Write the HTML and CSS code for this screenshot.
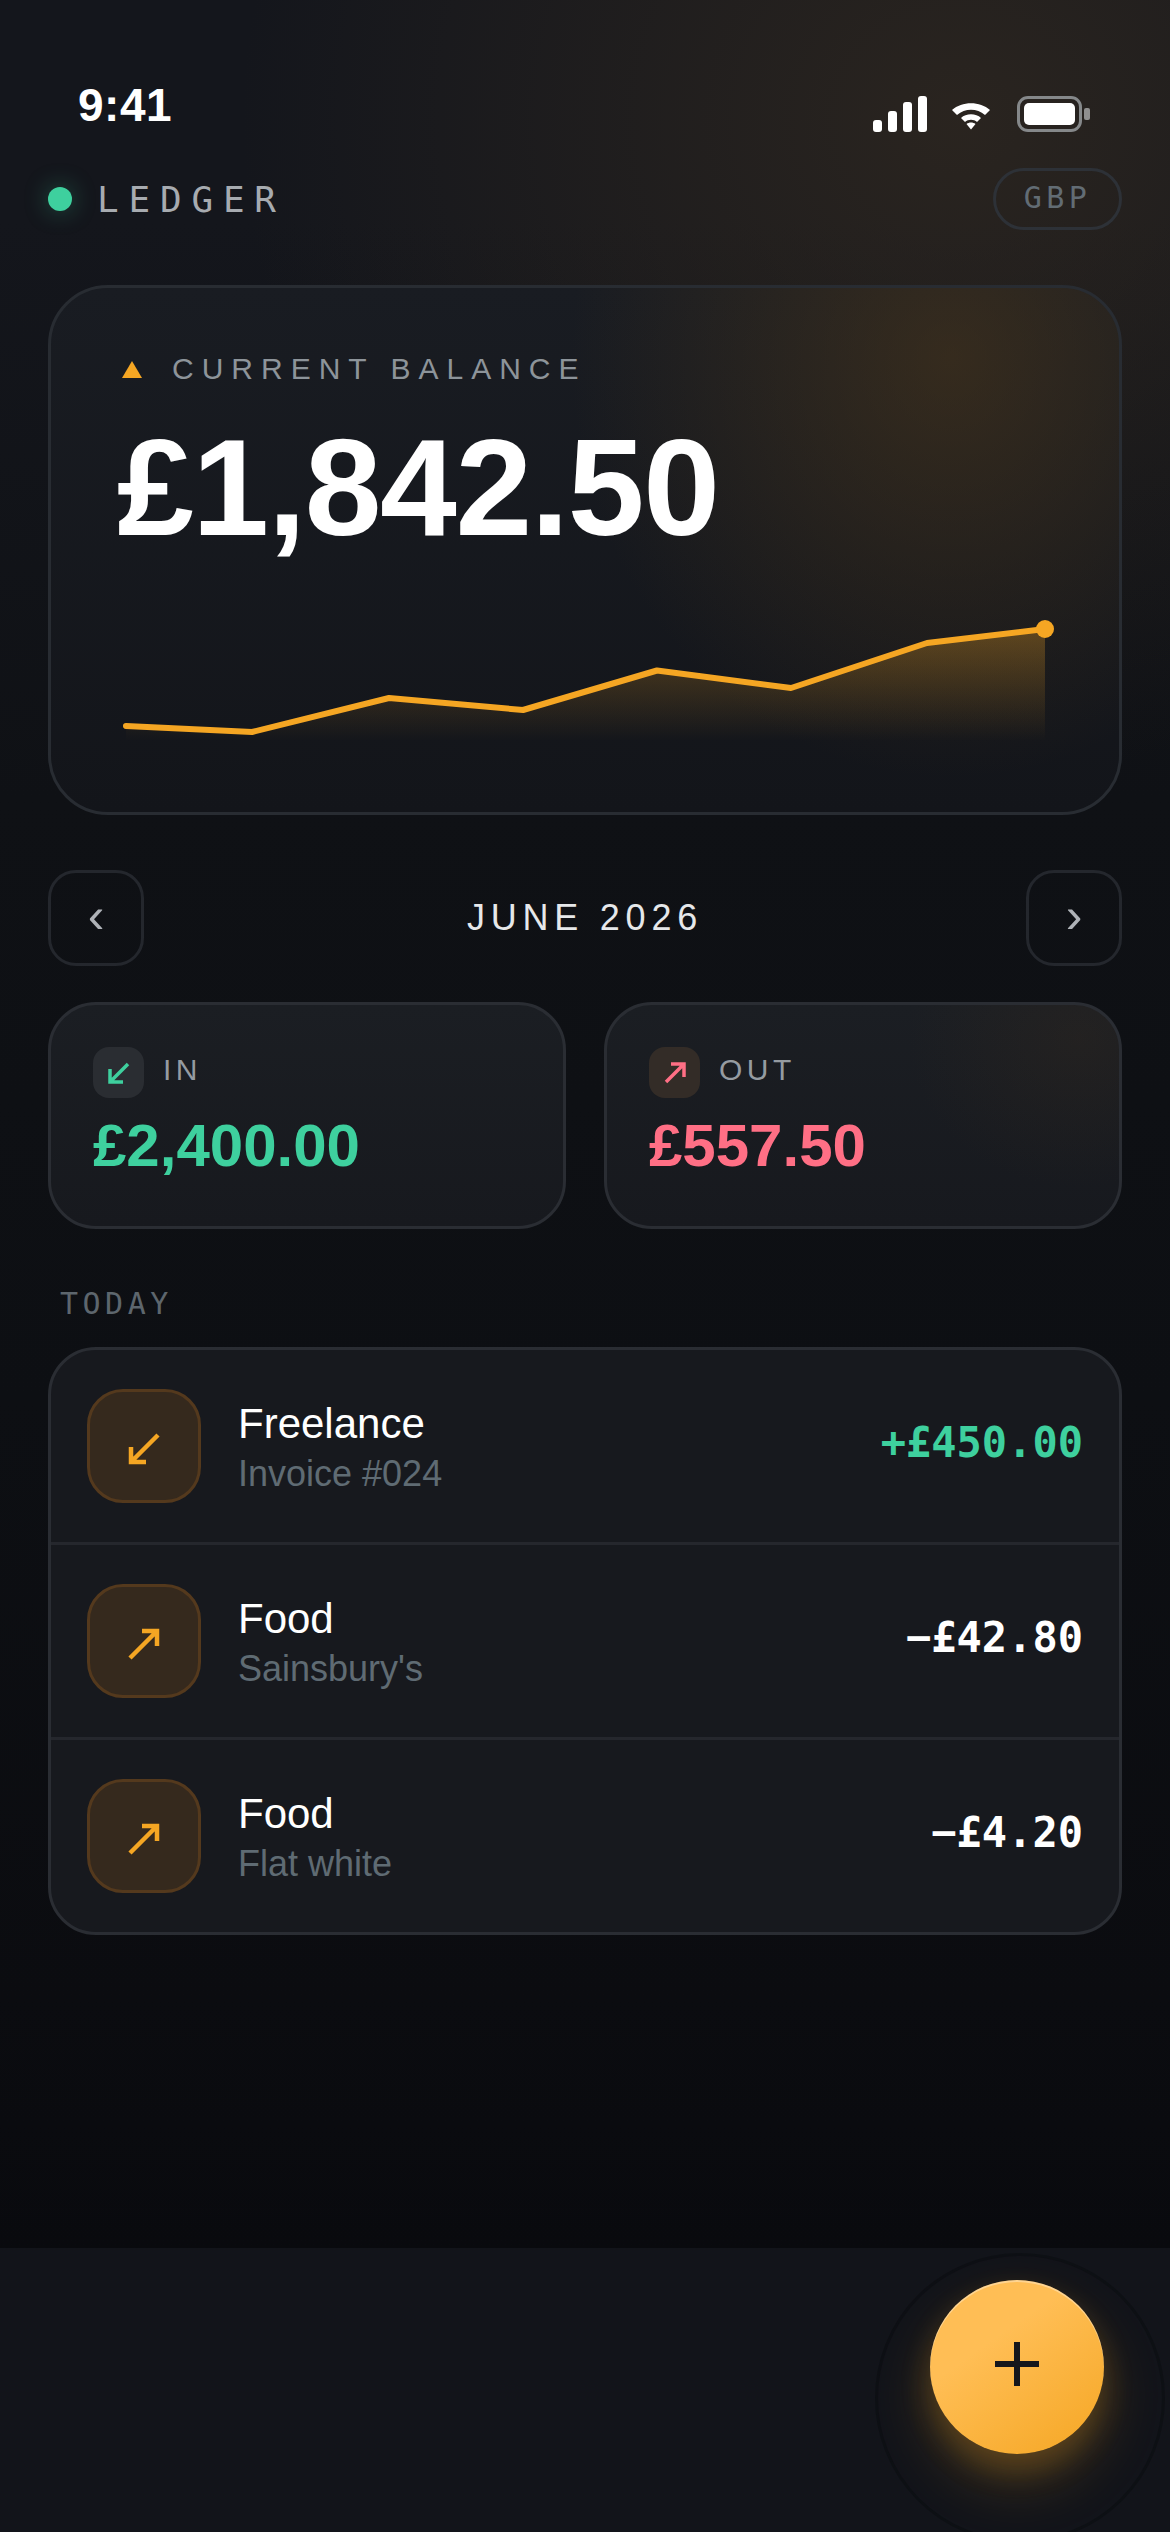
FILE: index.html
```html
<!DOCTYPE html>
<html lang="en">
<head>
<meta charset="utf-8">
<title>Ledger</title>
<link rel="stylesheet" href="styles.css">
</head>
<body>
<div class="phone">
  <main class="main">
    <div class="status">
      <span class="time">9:41</span>
      <div class="status-icons">
        <svg class="signal" width="54" height="36" viewBox="0 0 54 36"><rect x="0" y="24" width="9" height="12" rx="3"/><rect x="15" y="15" width="9" height="21" rx="3"/><rect x="30" y="6" width="9" height="30" rx="3"/><rect x="45" y="0" width="9" height="36" rx="3"/></svg>
        <svg class="wifi" width="40" height="28" viewBox="0 0 40 28"><path d="M1 8 C11 -1 29 -1 39 8 L34 13 C26 6 14 6 6 13 Z"/><path d="M10 16 C15 11 25 11 30 16 L26 20 C23 17 17 17 14 20 Z"/><path d="M15.5 22 C18 20 22 20 24.5 22 L20 27.5 Z"/></svg>
        <div class="battery"><div class="battery-body"><div class="battery-fill"></div></div><div class="battery-nub"></div></div>
      </div>
    </div>

    <header class="header">
      <div class="brand"><span class="dot"></span><span class="brand-name">LEDGER</span></div>
      <div class="pill">GBP</div>
    </header>

    <section class="balance-card">
      <div class="balance-label"><svg class="tri" width="20" height="17" viewBox="0 0 20 17"><path d="M10 0 L20 17 L0 17 Z"/></svg><span>CURRENT BALANCE</span></div>
      <div class="balance">£1,842.50</div>
      <svg class="chart" width="960" height="130" viewBox="0 0 960 130">
        <defs>
          <linearGradient id="area" x1="0" y1="0" x2="0" y2="1">
            <stop offset="0" stop-color="#f5a623" stop-opacity=".3"/>
            <stop offset="1" stop-color="#f5a623" stop-opacity="0"/>
          </linearGradient>
        </defs>
        <path d="M5 107 L131 113 L268 79 L402 91 L536 51.500 L670 69 L806 24 L924 10 L924 122 L5 122 Z" fill="url(#area)"/>
        <path d="M5 107 L131 113 L268 79 L402 91 L536 51.500 L670 69 L806 24 L924 10" fill="none" stroke="#f5a623" stroke-width="6" stroke-linecap="round" stroke-linejoin="round"/>
        <circle cx="924" cy="10" r="9" fill="#f5a623"/>
      </svg>
    </section>

    <nav class="month-nav">
      <button class="nav-btn" type="button">‹</button>
      <span class="month">JUNE 2026</span>
      <button class="nav-btn" type="button">›</button>
    </nav>

    <section class="stats">
      <div class="stat">
        <div class="stat-head">
          <span class="stat-icon stat-icon-in"><svg width="24" height="24" viewBox="0 0 24 24"><path d="M21 3 L3 21 M3 8 L3 21 L16 21" fill="none" stroke="#3ed09e" stroke-width="3.500"/></svg></span>
          <span class="stat-label">IN</span>
        </div>
        <div class="stat-amount green">£2,400.00</div>
      </div>
      <div class="stat stat-out">
        <div class="stat-head">
          <span class="stat-icon stat-icon-out"><svg width="24" height="24" viewBox="0 0 24 24"><path d="M3 21 L21 3 M8 3 L21 3 L21 16" fill="none" stroke="#ff6f85" stroke-width="3.500"/></svg></span>
          <span class="stat-label">OUT</span>
        </div>
        <div class="stat-amount red">£557.50</div>
      </div>
    </section>

    <h2 class="section-title">TODAY</h2>

    <section class="list">
      <div class="row">
        <span class="tile"><svg class="tile-arrow" width="32" height="32" viewBox="0 0 32 32"><path d="M30 2 L3 29 M3 14 L3 29 L18 29" fill="none" stroke="#f5a623" stroke-width="4.500"/></svg></span>
        <div class="row-text"><div class="row-title">Freelance</div><div class="row-sub">Invoice #024</div></div>
        <div class="row-amount green">+£450.00</div>
      </div>
      <div class="row">
        <span class="tile"><svg class="tile-arrow" width="32" height="32" viewBox="0 0 32 32"><path d="M2 30 L29 3 M14 3 L29 3 L29 18" fill="none" stroke="#f5a623" stroke-width="4.500"/></svg></span>
        <div class="row-text"><div class="row-title">Food</div><div class="row-sub">Sainsbury's</div></div>
        <div class="row-amount">−£42.80</div>
      </div>
      <div class="row">
        <span class="tile"><svg class="tile-arrow" width="32" height="32" viewBox="0 0 32 32"><path d="M2 30 L29 3 M14 3 L29 3 L29 18" fill="none" stroke="#f5a623" stroke-width="4.500"/></svg></span>
        <div class="row-text"><div class="row-title">Food</div><div class="row-sub">Flat white</div></div>
        <div class="row-amount">−£4.20</div>
      </div>
    </section>
  </main>

  <footer class="bottom-bar">
    <button class="fab" type="button" aria-label="Add"><svg width="44" height="44" viewBox="0 0 44 44"><path d="M22 0 V44 M0 22 H44" fill="none" stroke="#15171c" stroke-width="6"/></svg></button>
  </footer>
</div>
</body>
</html>
```

FILE: styles.css
```css
* { box-sizing: border-box; }
html, body { margin: 0; padding: 0; background: #08090c; }
body { font-family: "Liberation Sans", Arial, sans-serif; color: #fff; }

.phone {
  width: 1170px;
  height: 2532px;
  display: flex;
  flex-direction: column;
  overflow: hidden;
  background:
    radial-gradient(ellipse 720px 660px at 960px 120px, rgba(72, 56, 36, .42), rgba(72, 56, 36, 0) 100%),
    linear-gradient(180deg, #14161c 0, #14161c 220px, #0f1115 800px, #0d0f13 1400px, #0b0c10 2000px, #090a0e 2248px);
}

.main { flex: 1; padding: 0 48px; display: flex; flex-direction: column; }

.status { height: 136px; padding: 78px 32px 0 30px; display: flex; justify-content: space-between; align-items: flex-start; }
.time { font-size: 46px; font-weight: 700; line-height: 54px; letter-spacing: .5px; }
.status-icons { display: flex; align-items: flex-start; padding-top: 18px; }
.signal { fill: #fff; margin-right: 24px; }
.wifi { fill: #fff; margin: 6px 26px 0 0; }
.battery { display: flex; align-items: center; gap: 2px; }
.battery-body { width: 65px; height: 36px; border: 3px solid #85888a; border-radius: 11px; padding: 4px; }
.battery-fill { width: 100%; height: 100%; background: #fff; border-radius: 5px; }
.battery-nub { width: 6px; height: 12px; border-radius: 2px; background: #8f8f8f; }

.header { height: 149px; display: flex; justify-content: space-between; align-items: flex-start; padding-top: 32px; }
.brand { display: flex; align-items: center; gap: 25px; height: 62px; }
.dot { width: 24px; height: 24px; border-radius: 50%; background: #3ed09e; box-shadow: 0 0 24px rgba(62, 208, 158, .35); }
.brand-name { font-family: "DejaVu Sans Mono", monospace; font-size: 36px; letter-spacing: 9.800px; color: #a7abb0; }
.pill {
  width: 129px; height: 62px; padding-bottom: 4px; border: 3px solid #2d3137; border-radius: 31px;
  display: flex; align-items: center; justify-content: center;
  font-family: "DejaVu Sans Mono", monospace; font-size: 30px; letter-spacing: 4.500px; color: #626c74;
}

.balance-card {
  height: 530px;
  padding: 61px 66px 0;
  border: 3px solid #282c32;
  border-radius: 60px;
  background:
    radial-gradient(ellipse 380px 420px at 900px 70px, rgba(88, 62, 26, .46), rgba(88, 62, 26, 0) 100%),
    linear-gradient(180deg, #191c22, #13151a);
}
.balance-label { display: flex; align-items: center; gap: 30px; height: 40px; font-size: 30px; letter-spacing: 8px; color: #8d949a; }
.tri { fill: #f5a623; margin-left: 5px; }
.balance { margin-top: 21px; font-size: 138px; font-weight: 700; line-height: 154px; letter-spacing: -1.380px; }
.chart { display: block; margin: 55px 0 0 4px; overflow: visible; }

.month-nav { margin-top: 55px; display: flex; justify-content: space-between; align-items: center; }
.nav-btn {
  width: 96px; height: 96px; padding: 0 0 6px; background: transparent;
  border: 3px solid #24272d; border-radius: 28px;
  font-family: "Liberation Sans", sans-serif; font-size: 50px; line-height: 1; color: #aeb2b7;
}
.month { font-size: 36px; letter-spacing: 5.760px; color: #e6e8ea; }

.stats { margin-top: 36px; display: grid; grid-template-columns: 518px 518px; gap: 38px; }
.stat {
  height: 227px; padding: 42px 42px 0;
  border: 3px solid #2a2d33; border-radius: 48px;
  background: linear-gradient(180deg, #1b1e23, #17191e);
}
.stat-out {
  background:
    radial-gradient(ellipse 170px 150px at 92% 15%, rgba(70, 50, 28, .2), rgba(70, 50, 28, 0) 100%),
    linear-gradient(180deg, #1b1e23, #17191e);
}
.stat-head { display: flex; align-items: center; gap: 19px; height: 51px; }
.stat-icon { width: 51px; height: 51px; border-radius: 16px; display: flex; align-items: center; justify-content: center; }
.stat-icon-in { background: #2a2d32; }
.stat-icon-out { background: #332c27; }
.stat-label { font-size: 30px; line-height: 30px; letter-spacing: 4.500px; color: #959ba1; margin-top: -6px; }
.stat-amount { margin-top: 13px; font-size: 60px; font-weight: 700; line-height: 70px; }
.green { color: #3ed09e; }
.red { color: #ff6f85; }

.section-title {
  margin: 57px 0 0 12px; height: 61px;
  font-family: "DejaVu Sans Mono", monospace; font-size: 30px; font-weight: 400; letter-spacing: 4.500px; line-height: 36px; color: #5d666d;
}

.list { border: 3px solid #2a2d33; border-radius: 48px; background: #17191e; }
.row { height: 195px; padding: 0 36px; display: flex; align-items: center; border-top: 3px solid #25272d; }
.row:first-child { border-top: 0; height: 192px; }
.tile {
  width: 114px; height: 114px; flex: none; border-radius: 36px;
  background: #35291d; border: 3px solid #54391d;
  display: flex; align-items: center; justify-content: center;
}
.tile-arrow { margin-top: 6px; }
.row-text { flex: 1; margin-left: 37px; margin-top: 2px; }
.row-title { font-size: 42px; line-height: 50px; color: #fff; }
.row-sub { font-size: 36px; line-height: 44px; margin-top: 3px; color: #5f6b73; }
.row-amount { font-family: "DejaVu Sans Mono", monospace; font-size: 42px; font-weight: 700; color: #fff; margin-top: -7px; }
.row-amount.green { color: #3ed09e; }

.bottom-bar { position: relative; height: 284px; flex: none; background: #12141a; }
.fab {
  position: absolute; left: 930px; top: 32px;
  width: 174px; height: 174px; padding: 0 0 6px; border: 0; border-radius: 50%;
  background: linear-gradient(145deg, #ffbe55 35%, #f5a623 100%);
  box-shadow:
    inset 0 2px 0 rgba(255, 255, 255, .35),
    0 16px 30px rgba(245, 166, 35, .24),
    0 28px 50px 12px rgba(245, 166, 35, .12);
  display: flex; align-items: center; justify-content: center;
}
.fab::after {
  content: "";
  position: absolute; left: -55px; top: -27px;
  width: 284px; height: 284px; border-radius: 50%;
  border: 3px solid rgba(8, 9, 12, .4);
}
```
